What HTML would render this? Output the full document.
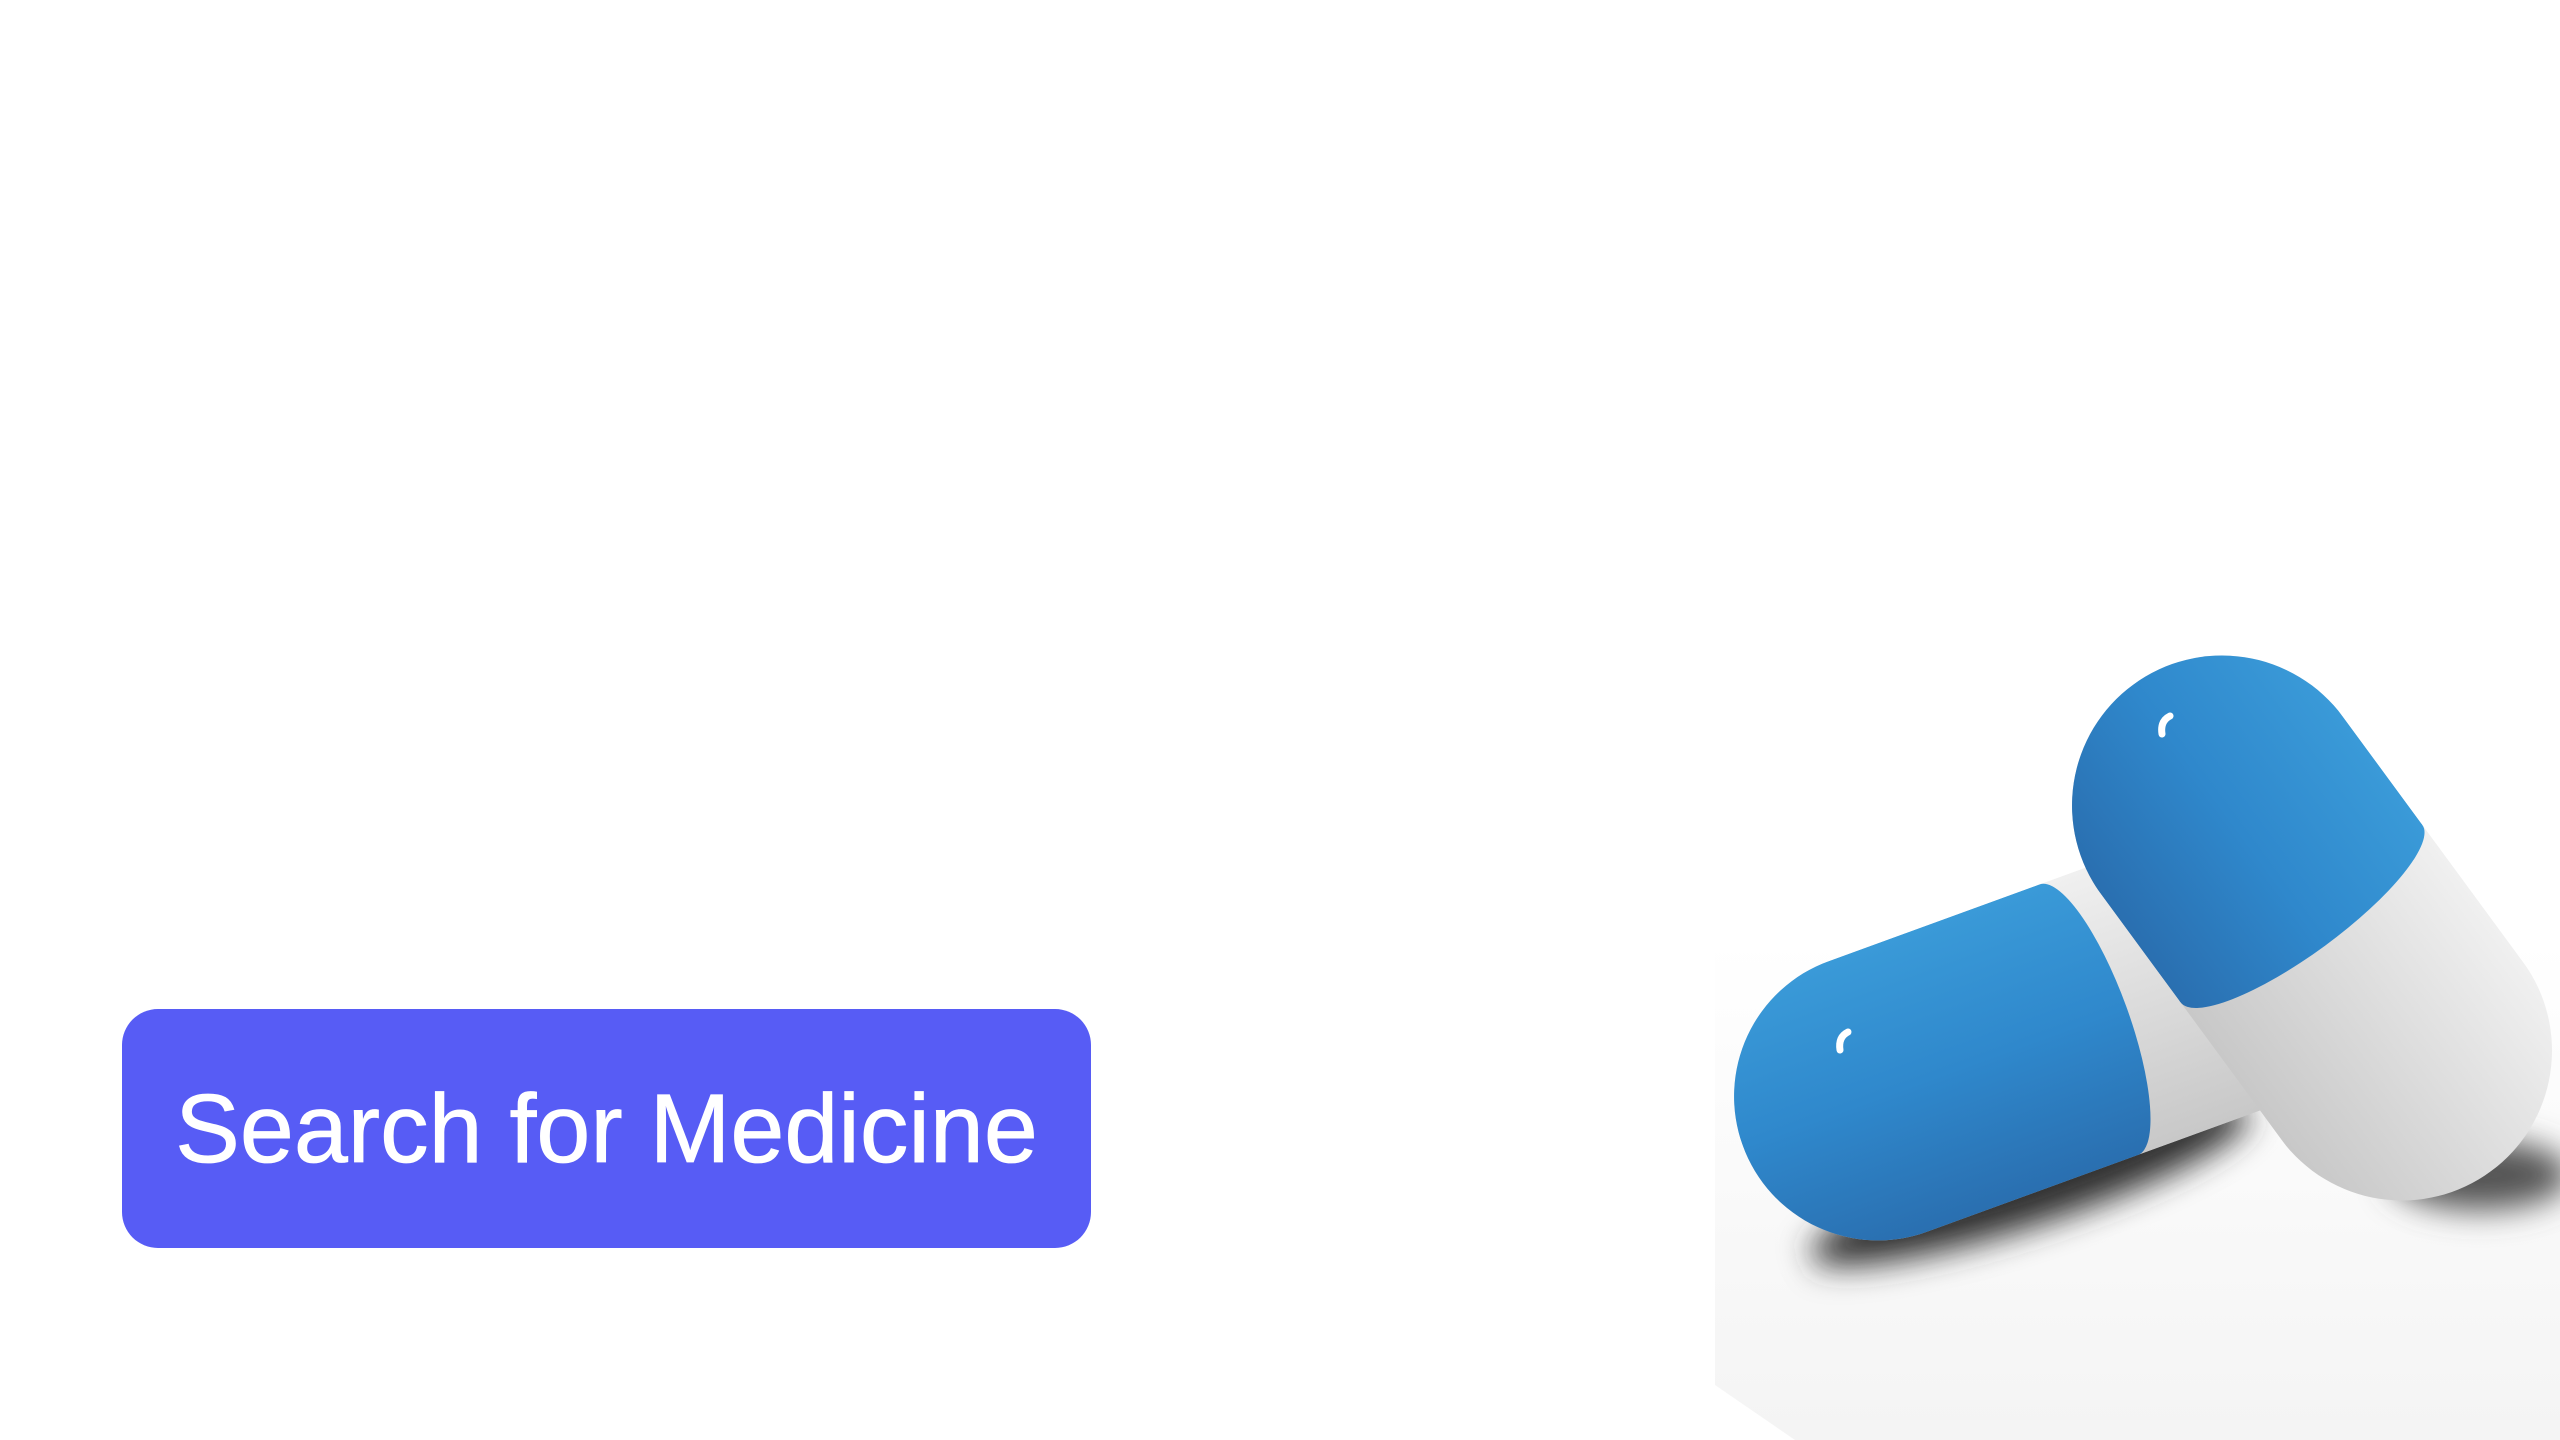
<!DOCTYPE html>
<html><head><meta charset="utf-8"><style>
html,body{margin:0;padding:0;background:#fff;width:2560px;height:1440px;overflow:hidden;position:relative}
.btn{position:absolute;left:122px;top:1009px;width:969px;height:239px;background:#575cf5;border-radius:36px;color:#fff;font-family:"Liberation Sans",sans-serif;font-size:97px;line-height:239px;text-align:center;-webkit-text-stroke:0.8px #fff}
svg{position:absolute;left:0;top:0}
</style></head><body>
<svg width="2560" height="1440" viewBox="0 0 2560 1440">
<defs>
<linearGradient id="bg" x1="0" y1="0" x2="0" y2="1"><stop offset="0" stop-color="#fff"/><stop offset="1" stop-color="#f4f4f4"/></linearGradient>
<linearGradient id="bl" x1="0" y1="0" x2="0" y2="1"><stop offset="0" stop-color="#3a9ad8"/><stop offset="0.5" stop-color="#2f88cc"/><stop offset="1" stop-color="#2a6fb0"/></linearGradient>
<linearGradient id="wh" x1="0" y1="0" x2="0" y2="1"><stop offset="0" stop-color="#f0f0f0"/><stop offset="0.5" stop-color="#dcdcdc"/><stop offset="1" stop-color="#c8c8c8"/></linearGradient>
<filter id="bl1" x="-50%" y="-100%" width="200%" height="300%"><feGaussianBlur stdDeviation="16"/></filter>
<clipPath id="c1"><rect x="-302" y="-150" width="604" height="300" rx="150"/></clipPath>
<clipPath id="c2"><rect x="-344" y="-144" width="688" height="288" rx="144"/></clipPath>
</defs>
<polygon points="1715,940 2560,940 2560,1440 1795,1440 1715,1385" fill="url(#bg)"/>
<ellipse cx="2030" cy="1185" rx="230" ry="40" fill="#333" filter="url(#bl1)" transform="rotate(-18 2030 1185)"/>
<ellipse cx="2480" cy="1175" rx="90" ry="35" fill="#555" filter="url(#bl1)"/>
<g transform="translate(2066,1028) rotate(-20)">
<g clip-path="url(#c2)">
<rect x="-344" y="-144" width="688" height="288" fill="url(#wh)"/>
<rect x="-344" y="-144" width="368" height="288" fill="url(#bl)"/>
<ellipse cx="24" cy="0" rx="40" ry="144" fill="url(#bl)"/>
</g></g>
<g transform="translate(2312,928) rotate(53.7)">
<g clip-path="url(#c1)">
<rect x="-302" y="-150" width="604" height="300" fill="url(#wh)"/>
<rect x="-302" y="-150" width="284" height="300" fill="url(#bl)"/>
<ellipse cx="-18" cy="0" rx="40" ry="150" fill="url(#bl)"/>
</g></g>
<path d="M2170,716 q-10,5 -8,18" stroke="#fff" stroke-width="7" fill="none" stroke-linecap="round"/>
<path d="M1848,1032 q-10,5 -8,18" stroke="#fff" stroke-width="7" fill="none" stroke-linecap="round"/>
</svg>
<div class="btn">Search for Medicine</div>
</body></html>
